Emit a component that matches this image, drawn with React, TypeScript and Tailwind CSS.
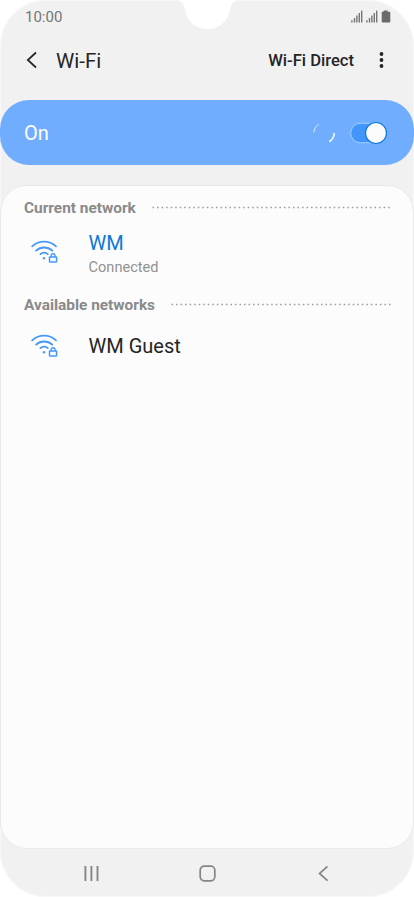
import { ReactNode } from "react";

function Signal() {
  return (
    <svg className="w-3 h-3.5" viewBox="0 0 12 14" fill="#757575">
      <rect x="0.2" y="10.2" width="1.4" height="2.3" />
      <rect x="2.8" y="8" width="1.4" height="4.5" />
      <rect x="5.2" y="5.5" width="1.4" height="7" />
      <rect x="7.6" y="3" width="1.4" height="9.5" />
      <rect x="10" y="0.6" width="1.4" height="11.9" />
    </svg>
  );
}

function SecureWifi() {
  return (
    <svg
      className="w-7 h-[25px] shrink-0"
      viewBox="0 0 28 25"
      fill="none"
      stroke="#4798fb"
      strokeWidth="1.8"
      strokeLinecap="round"
    >
      <path d="M2.2 8.3C9 2.1 19.2 2.1 26 8.3" />
      <path d="M6.1 12.7C10.6 8.4 17.8 8.4 22.3 12.7" />
      <path d="M10.4 16.1C12.6 14 15.8 14 17.8 16.1" />
      <circle cx="14" cy="20.3" r="1.2" fill="#4798fb" stroke="none" />
      <rect x="19.5" y="18.9" width="7.1" height="5.1" rx="0.4" strokeWidth="1.5" />
      <path d="M21.2 18.7V17.6a1.9 1.9 0 0 1 3.8 0v1.1" strokeWidth="1.4" />
    </svg>
  );
}

function SectionTitle({ children }: { children: ReactNode }) {
  return (
    <div className="flex items-center gap-4 pl-[23px] pr-[22px] h-5">
      <h2 className="text-[15.4px] leading-5 font-bold text-[#8a8a8a] whitespace-nowrap">
        {children}
      </h2>
      <svg className="flex-1 min-w-0 h-1">
        <line x1="0.5" y1="1.5" x2="100%" y2="1.5" stroke="#a0a0a0" strokeWidth="1.6" strokeDasharray="1.6 2.93" />
      </svg>
    </div>
  );
}

export default function App() {
  return (
    <div className="w-[414px] h-[897px] bg-white overflow-hidden font-['Roboto',sans-serif]">
      <div className="relative flex flex-col h-full bg-[#f1f1f1] shadow-[inset_0_0_0_1px_#f8f8f8] rounded-[46px] overflow-hidden">
        {/* Camera notch */}
        <svg className="absolute top-0 left-[176px] w-[64px] h-[30px]" viewBox="0 0 64 30">
          <path d="M1 0C6 1 8 4 9 10C11 21 20 29 31.7 29C43 29 52.5 21 54 10C55 4 57 1 62 0Z" fill="#fff" />
        </svg>

        {/* Status bar */}
        <div className="flex items-center justify-between h-8 shrink-0 pl-[25px] pr-[23px]">
          <span className="text-[15px] leading-5 text-[#757575] mt-0.5">10:00</span>
          <div className="flex items-center gap-[3px] mt-px">
            <Signal />
            <Signal />
            <svg className="w-2.5 h-3.5" viewBox="0 0 10 14" fill="#6b6b6b">
              <path d="M2.6 0.5h4.2v1.2h1.7a0.8 0.8 0 0 1 0.8 0.8v9.2a0.8 0.8 0 0 1-0.8 0.8h-7a0.8 0.8 0 0 1-0.8-0.8V2.5a0.8 0.8 0 0 1 0.8-0.8h1.1Z" />
            </svg>
          </div>
        </div>

        {/* Header */}
        <header className="flex items-center h-14 mb-3 shrink-0 pl-6 pr-6 text-[#252525]">
          <svg className="w-4 h-5" viewBox="0 0 16 20" fill="none" stroke="currentColor" strokeWidth="1.7">
            <path d="M12 2.5L3.8 10L12 17.5" />
          </svg>
          <h1 className="ml-4 text-[20.6px] leading-7 mt-0.5">Wi-Fi</h1>
          <span className="ml-auto text-[16.6px] leading-6 font-medium mt-0.5">Wi-Fi Direct</span>
          <svg className="ml-[23px] w-[13px] h-5" viewBox="0 0 13 20" fill="currentColor">
            <circle cx="4.5" cy="4" r="1.9" />
            <circle cx="4.5" cy="10" r="1.9" />
            <circle cx="4.5" cy="16" r="1.9" />
          </svg>
        </header>

        {/* Wi-Fi switch */}
        <div className="flex items-center h-[65px] shrink-0 bg-[#71adff] rounded-[29px] pl-6 pr-[26px]">
          <span className="text-[20px] leading-7 text-white">On</span>
          <svg className="ml-auto w-6 h-6" viewBox="0 0 24 24" fill="none" stroke="#fff">
            <path d="M1.8 11.5A10.4 10.4 0 0 1 6.7 3.3" strokeWidth="1" opacity="0.75" />
            <path d="M22.2 12A10.4 10.4 0 0 1 17.2 20.7" strokeWidth="1.5" />
          </svg>
          <svg className="ml-3.5 w-[38px] h-6" viewBox="0 0 38 24">
            <rect x="0.7" y="2.3" width="36" height="19.4" rx="9.7" fill="#4295fb" stroke="#a5cdff" strokeWidth="1" />
            <circle cx="26" cy="12" r="10.5" fill="#fcfcfc" stroke="#1179dc" strokeWidth="1.2" />
          </svg>
        </div>

        {/* Networks */}
        <main className="flex-1 mt-5 bg-[#fcfcfc] border border-[#e9e9e9] rounded-[27px] pt-3">
          <SectionTitle>Current network</SectionTitle>
          <div className="flex pl-[29px] pt-5 h-[77px]">
            <SecureWifi />
            <div className="ml-[30.5px] -mt-[9px]">
              <p className="text-[20px] leading-7 text-[#0a79d8]">WM</p>
              <p className="text-[14.6px] leading-5 text-[#929292]">Connected</p>
            </div>
          </div>
          <SectionTitle>Available networks</SectionTitle>
          <div className="flex pl-[29px] pt-[17px]">
            <SecureWifi />
            <p className="ml-[30.5px] text-[20px] leading-7 text-[#252525]">WM Guest</p>
          </div>
        </main>

        {/* Navigation bar */}
        <nav className="flex items-center justify-between h-12 shrink-0 pt-0.5 pl-[82px] pr-[81px] text-[#858585]">
          <svg className="w-[18px] h-5" viewBox="0 0 18 20" stroke="currentColor" strokeWidth="1.9">
            <path d="M3.4 2v15M9.4 2v15M15.5 2v15" />
          </svg>
          <svg className="w-5 h-5" viewBox="0 0 20 20" fill="none" stroke="currentColor" strokeWidth="1.7">
            <rect x="2.2" y="2.2" width="14.6" height="14.6" rx="4" />
          </svg>
          <svg className="w-[18px] h-5" viewBox="0 0 18 20" fill="none" stroke="currentColor" strokeWidth="1.7">
            <path d="M12.5 2.3L4.5 9.5L12.5 16.7" />
          </svg>
        </nav>
      </div>
    </div>
  );
}
